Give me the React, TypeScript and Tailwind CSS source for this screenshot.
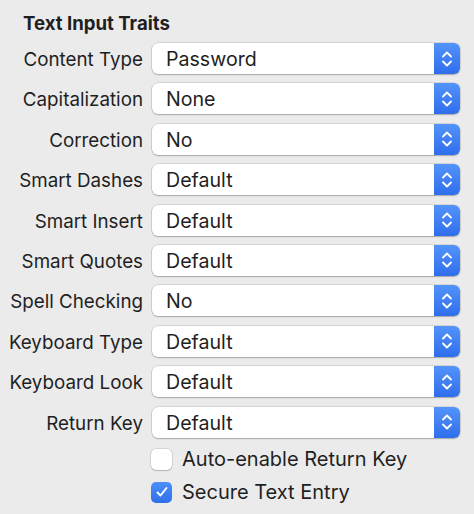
import React from "react";

const rows: [string, string][] = [
  ["Content Type", "Password"],
  ["Capitalization", "None"],
  ["Correction", "No"],
  ["Smart Dashes", "Default"],
  ["Smart Insert", "Default"],
  ["Smart Quotes", "Default"],
  ["Spell Checking", "No"],
  ["Keyboard Type", "Default"],
  ["Keyboard Look", "Default"],
  ["Return Key", "Default"],
];

function Chevrons() {
  return (
    <svg width="12" height="20" viewBox="0 0 12 20" fill="none">
      <path d="M2 7.5 L6 3.5 L10 7.5" stroke="white" strokeWidth="1.8" strokeLinecap="round" strokeLinejoin="round" />
      <path d="M2 12.5 L6 16.5 L10 12.5" stroke="white" strokeWidth="1.8" strokeLinecap="round" strokeLinejoin="round" />
    </svg>
  );
}

function PopUp({ value }: { value: string }) {
  return (
    <div className="flex h-[31px] overflow-hidden rounded-[6px] bg-white shadow-[0_0_0_0.5px_rgba(0,0,0,0.18),0_1px_1.5px_rgba(0,0,0,0.22)]">
      <span className="flex-1 pl-[14px] text-[19.6px] leading-[32px] text-[#1f1f1f]">{value}</span>
      <span className="flex w-[26px] items-center justify-center bg-gradient-to-b from-[#5393fa] to-[#2f6eec]">
        <Chevrons />
      </span>
    </div>
  );
}

function Checkbox({ checked, label }: { checked?: boolean; label: string }) {
  return (
    <div className="flex h-[21px] items-center gap-[10px]">
      {checked ? (
        <span className="flex h-[21px] w-[21px] items-center justify-center rounded-[5px] bg-gradient-to-b from-[#4c8ffa] to-[#2f6eec]">
          <svg width="14" height="14" viewBox="0 0 14 14" fill="none">
            <path d="M2.5 7.5 L5.5 10.5 L11.5 3" stroke="white" strokeWidth="1.9" strokeLinecap="round" strokeLinejoin="round" />
          </svg>
        </span>
      ) : (
        <span className="h-[21px] w-[21px] rounded-[5px] bg-white shadow-[0_0_0_0.5px_rgba(0,0,0,0.2),0_1px_1px_rgba(0,0,0,0.15)]" />
      )}
      <span className="text-[20px] text-[#1f1f1f]">{label}</span>
    </div>
  );
}

export default function App() {
  return (
    <div className="h-[514px] w-[474px] bg-[#ebebeb] pr-[14px] pt-[12px] font-['Inter',sans-serif] text-[#1f1f1f]">
      <h2 className="pl-[23px] text-[18.6px] font-bold leading-[22px]">Text Input Traits</h2>
      <div className="mt-[9px] grid grid-cols-[143px_1fr] gap-x-[9px] gap-y-[9.4px]">
        {rows.map(([label, value]) => (
          <React.Fragment key={label}>
            <span className="h-[31px] whitespace-nowrap text-right text-[18.8px] leading-[33px]">{label}</span>
            <PopUp value={value} />
          </React.Fragment>
        ))}
      </div>
      <div className="ml-[151px] mt-[11px] flex flex-col gap-[12px]">
        <Checkbox label="Auto-enable Return Key" />
        <Checkbox checked label="Secure Text Entry" />
      </div>
    </div>
  );
}
